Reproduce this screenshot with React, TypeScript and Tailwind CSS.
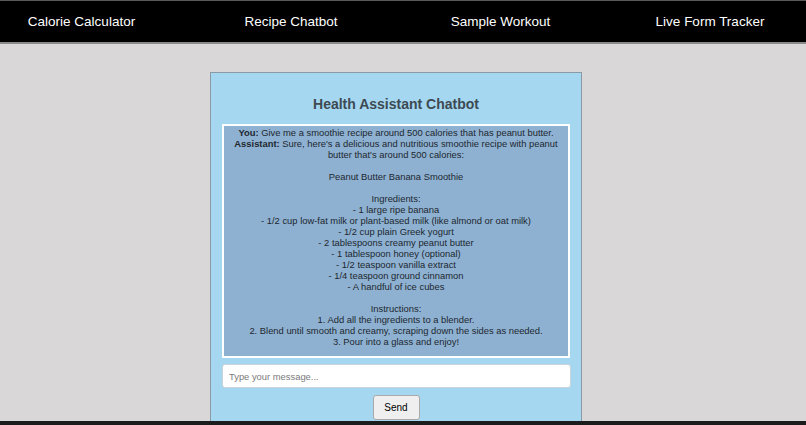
const navItems = ['Calorie Calculator', 'Recipe Chatbot', 'Sample Workout', 'Live Form Tracker'];

const ingredients = [
  '- 1 large ripe banana',
  '- 1/2 cup low-fat milk or plant-based milk (like almond or oat milk)',
  '- 1/2 cup plain Greek yogurt',
  '- 2 tablespoons creamy peanut butter',
  '- 1 tablespoon honey (optional)',
  '- 1/2 teaspoon vanilla extract',
  '- 1/4 teaspoon ground cinnamon',
  '- A handful of ice cubes',
];

const steps = [
  '1. Add all the ingredients to a blender.',
  '2. Blend until smooth and creamy, scraping down the sides as needed.',
  '3. Pour into a glass and enjoy!',
];

export default function App() {
  return (
    <div
      className="h-[425px] w-[806px] flex flex-col overflow-hidden bg-[#d9d7d7]"
      style={{ fontFamily: '"Liberation Sans", Arial, sans-serif' }}
    >
      {/* Top navigation */}
      <nav className="h-[44px] shrink-0 flex items-center gap-[49.5px] pl-[1.5px] bg-black border-t border-[#5a5a5a] border-b-2 border-b-[#8a8a8a]">
        {navItems.map((item) => (
          <a key={item} className="w-[160px] text-center text-white text-[13.5px] leading-none">
            {item}
          </a>
        ))}
      </nav>

      {/* Main content */}
      <main className="flex-1 overflow-hidden pt-[28px]">
        <div className="ml-[210px] w-[372px] bg-[#a6d7f1] border border-[#8a9ba6] px-[11px] pt-[22px] pb-4">
          <h2 className="text-center text-[14px] font-bold text-[#3d4a52] leading-[18px]">Health Assistant Chatbot</h2>

          <div className="mt-[11px] h-[234px] border-2 border-white bg-[#8eb1d1] pt-px text-center text-[9.4px] leading-[11px] text-[#1d2730]">
            <p>
              <b>You:</b> Give me a smoothie recipe around 500 calories that has peanut butter.
            </p>
            <p>
              <b>Assistant:</b> Sure, here's a delicious and nutritious smoothie recipe with peanut
              <br />
              butter that's around 500 calories:
            </p>
            <p className="mt-[11px]">Peanut Butter Banana Smoothie</p>
            <p className="mt-[11px]">Ingredients:</p>
            {ingredients.map((line) => (
              <p key={line}>{line}</p>
            ))}
            <p className="mt-[11px]">Instructions:</p>
            {steps.map((line) => (
              <p key={line}>{line}</p>
            ))}
          </div>

          <input
            type="text"
            placeholder="Type your message..."
            className="mt-[6px] block w-[349px] h-[24px] bg-white border border-[#c9d3d8] rounded-[3px] px-[6px] text-[9.4px] text-[#333] placeholder:text-[#7a7a7a] outline-none"
          />

          <div className="flex justify-center mt-[7px]">
            <button className="w-[47px] h-[25px] bg-[#efefef] border border-[#a9a9a9] rounded-[3px] text-[10px] text-black">
              Send
            </button>
          </div>
        </div>
      </main>

      {/* bottom edge strip */}
      <div className="h-[4px] shrink-0 bg-[#1c1c1c]" />
    </div>
  );
}
